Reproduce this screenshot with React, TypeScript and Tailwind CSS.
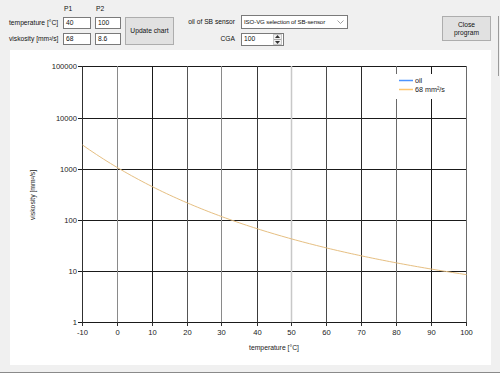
const xTicks = [-10, 0, 10, 20, 30, 40, 50, 60, 70, 80, 90, 100];
// pixel columns of the x grid lines inside the chart panel
const xPos = [72.5, 107.5, 142.5, 177.5, 211.5, 247.5, 281.5, 316.5, 351.5, 386.5, 421.5, 456.5];
const xColor = ['#303030', '#8a8a8a', '#1a1a1a', '#555555', '#8a8a8a', '#3a3a3a', '#c8c8c8', '#4a4a4a', '#2a2a2a', '#6a6a6a', '#1a1a1a', '#6a6a6a'];
const yTicks = ['100000', '10000', '1000', '100', '10', '1'];
const yPos = [16.5, 68.5, 119.5, 170.5, 221.5, 272.5];

// Walther / ASTM D341 line through 68 mm²/s @ 40 °C and 8.6 mm²/s @ 100 °C
function walther(v1: number, v2: number) {
  const z = (v: number) => Math.log10(Math.log10(v + 0.7));
  const l1 = Math.log10(313.15);
  const l2 = Math.log10(373.15);
  const b = (z(v1) - z(v2)) / (l2 - l1);
  const a = z(v1) + b * l1;
  return (t: number) => Math.pow(10, Math.pow(10, a - b * Math.log10(t + 273.15))) - 0.7;
}

function curvePath() {
  const visc = walther(68, 8.6);
  const pts: string[] = [];
  for (let t = -10; t <= 100; t += 1) {
    const px = 72.5 + ((t + 10) / 110) * 384;
    const py = 272.5 - Math.log10(visc(t)) * 51.2;
    pts.push(`${px.toFixed(2)},${py.toFixed(2)}`);
  }
  return 'M' + pts.join(' L');
}

function TextBox({ value, className }: { value: string; className: string }) {
  return (
    <div className={`h-[12px] bg-white border border-[#7a7a7a] pl-[2px] flex items-center leading-none ${className}`}>
      {value}
    </div>
  );
}

function Chart() {
  return (
    <svg width="481" height="315" viewBox="0 0 481 315" className="block" style={{ fontFamily: '"Liberation Sans", Arial, sans-serif' }}>
      {yPos.map((y, i) => (
        <g key={'h' + i}>
          <line x1={72} x2={457} y1={y} y2={y} stroke="#1a1a1a" strokeWidth={1} />
          <line x1={68} x2={72} y1={y} y2={y} stroke="#1a1a1a" strokeWidth={1} />
          <text x={67} y={y + 2.6} fontSize="7.6" textAnchor="end" fill="#1a1a1a">{yTicks[i]}</text>
        </g>
      ))}
      {xPos.map((x, i) => (
        <g key={'v' + i}>
          <line x1={x} x2={x} y1={16} y2={273} stroke={xColor[i]} strokeWidth={i === 6 ? 1.5 : 1} />
          <line x1={x} x2={x} y1={272} y2={276} stroke="#303030" strokeWidth={1} />
          <text x={x} y={285} fontSize="7.6" textAnchor="middle" fill="#1a1a1a">{xTicks[i]}</text>
        </g>
      ))}
      <path d={curvePath()} fill="none" stroke="#e6bf82" strokeWidth={1} />
      <rect x={384} y={24} width={52} height={25} fill="#ffffff" />
      <line x1={389} x2={403} y1={30.5} y2={30.5} stroke="#4d94ff" strokeWidth={1.5} />
      <line x1={389} x2={403} y1={39.5} y2={39.5} stroke="#ffc66e" strokeWidth={1.5} />
      <text x={405} y={33} fontSize="7.2" fill="#1a1a1a">oil</text>
      <text x={405} y={42} fontSize="7.2" fill="#1a1a1a">68 mm²/s</text>
      <text x={264} y={300} fontSize="6.8" textAnchor="middle" fill="#1a1a1a">temperature [°C]</text>
      <text x={0} y={0} fontSize="6.8" textAnchor="middle" fill="#1a1a1a" transform="translate(25 145) rotate(-90)">viskosity [mm²/s]</text>
    </svg>
  );
}

export default function App() {
  return (
    <div
      className="relative w-[500px] h-[373px] bg-[#f0f0f0] text-[6.7px] text-[#111] whitespace-nowrap overflow-hidden border-b border-[#8a8a8a]"
      style={{ fontFamily: '"Liberation Sans", Arial, sans-serif' }}
    >
      <div className="flex h-[50px]">
        {/* P1/P2 input block */}
        <div className="ml-[9px] flex flex-col">
          <div className="h-[11px] mt-[4px] flex items-center">
            <div className="w-[55px]" />
            <div className="w-[32px]">P1</div>
            <div>P2</div>
          </div>
          <div className="mt-[2px] flex items-center gap-[4px]">
            <div className="w-[50px]">temperature [°C]</div>
            <TextBox value="40" className="w-[28px]" />
            <TextBox value="100" className="w-[26px]" />
          </div>
          <div className="mt-[4px] flex items-center gap-[4px]">
            <div className="w-[50px]">viskosity [mm²/s]</div>
            <TextBox value="68" className="w-[28px]" />
            <TextBox value="8.6" className="w-[26px]" />
          </div>
        </div>
        <div className="ml-[4px] mt-[17px] w-[49px] h-[28px] bg-[#e1e1e1] border border-[#adadad] flex items-center justify-center">
          Update chart
        </div>

        {/* sensor block */}
        <div className="ml-[13px] mt-[15px] flex flex-col gap-[4px]">
          <div className="flex items-center gap-[6px]">
            <div className="w-[48px] text-right">oil of SB sensor</div>
            <div className="w-[107px] h-[14px] bg-white border border-[#7a7a7a] flex items-center pl-[2px] pr-[3px] overflow-hidden">
              <span className="flex-1 text-[6.1px] tracking-[-0.1px]">ISO-VG selection of SB-sensor</span>
              <svg width="7" height="4" viewBox="0 0 7 4">
                <path d="M0.5 0.5 L3.5 3.5 L6.5 0.5" fill="none" stroke="#8a8a8a" strokeWidth="0.8" />
              </svg>
            </div>
          </div>
          <div className="flex items-center gap-[6px]">
            <div className="w-[48px] text-right">CGA</div>
            <div className="w-[43px] h-[13px] bg-white border border-[#7a7a7a] flex items-center pl-[2px]">
              <span className="flex-1">100</span>
              <div className="w-[9px] h-[11px] mr-[1px] bg-[#f0f0f0] border border-[#c8c8c8] flex flex-col items-center justify-center gap-[1px]">
                <svg width="5" height="3" viewBox="0 0 5 3"><path d="M0 3 L2.5 0 L5 3 Z" fill="#333" /></svg>
                <div className="w-[7px] h-px bg-[#aaaaaa]" />
                <svg width="5" height="3" viewBox="0 0 5 3"><path d="M0 0 L2.5 3 L5 0 Z" fill="#333" /></svg>
              </div>
            </div>
          </div>
        </div>

        <div className="ml-auto mr-[9px] mt-[16px] w-[49px] h-[25px] bg-[#e1e1e1] border border-[#adadad] flex flex-col items-center justify-center leading-[8px]">
          <span>Close</span>
          <span>program</span>
        </div>
      </div>

      <div className="ml-[10px] w-[481px] h-[315px] bg-white">
        <Chart />
      </div>
      <div className="absolute right-[1px] top-[16px] w-px h-[60px] bg-[#9a9a9a]" />
    </div>
  );
}
